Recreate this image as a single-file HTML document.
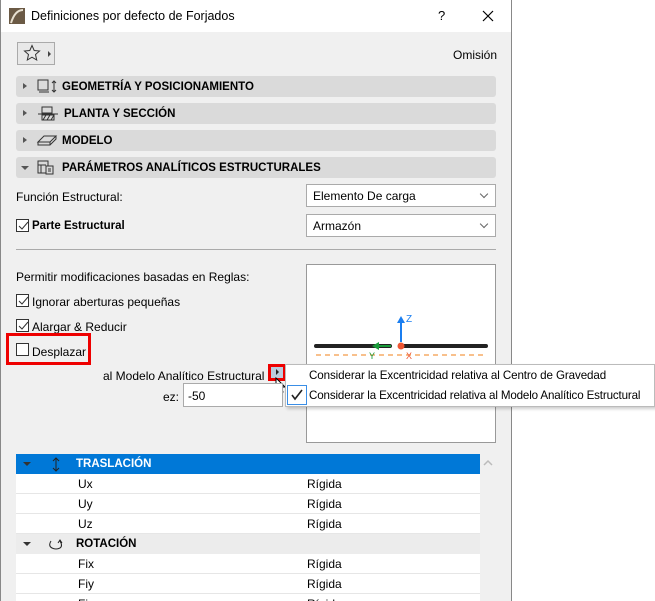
<!DOCTYPE html>
<html><head><meta charset="utf-8"><style>
*{box-sizing:border-box;margin:0;padding:0}
html,body{width:655px;height:601px;overflow:hidden}
body{background:#fff;font-family:"Liberation Sans",sans-serif;font-size:12px;color:#000;position:relative}
.a{position:absolute;white-space:nowrap}
.dlg{left:0;top:0;width:512px;height:601px;background:#f0f0f0;border-left:1px solid #888;border-right:1px solid #888}
.title{left:1px;top:0;width:510px;height:32px;background:#fff}
.bar{left:16px;width:480px;height:21px;background:#dadada;border-radius:3px;font-weight:bold;font-size:11.5px;line-height:22px}
.tri{position:absolute;left:7px;top:7px;width:0;height:0;border-top:3.5px solid transparent;border-bottom:3.5px solid transparent;border-left:4px solid #555}
.dd{left:306px;width:190px;height:23px;background:#fff;border:1px solid #aaa;padding-left:6px;line-height:22px}
.dd:after{content:"";position:absolute;right:8px;top:6px;width:5px;height:5px;border-right:1px solid #666;border-bottom:1px solid #666;transform:rotate(45deg)}
.cb{width:13px;height:13px;border:1px solid #333;background:#fff}
.row{left:16px;width:464px;height:20px;background:#fff;border-bottom:1px solid #e6e6e6;line-height:20px}
.row .n{position:absolute;left:62px}.row .v{position:absolute;left:291px}
</style></head><body>
<div class="a dlg"></div>
<div class="a title"></div>
<svg class="a" style="left:9px;top:8px" width="16" height="16"><rect width="16" height="16" fill="#6b5a45"/><path d="M2 15 Q6 2 14 2" stroke="#e8e0d0" stroke-width="2" fill="none"/></svg>
<div class="a" style="left:31px;top:9px;font-size:12.5px">Definiciones por defecto de Forjados</div>
<div class="a" style="left:438px;top:8px;font-size:13px">?</div>
<svg class="a" style="left:482px;top:10px" width="12" height="12"><path d="M1 1L11 11M11 1L1 11" stroke="#000" stroke-width="1.2"/></svg>
<div class="a" style="left:17px;top:42px;width:38px;height:23px;border:1px solid #aaa;background:#e8e8e8"></div>
<svg class="a" style="left:23px;top:44px" width="18" height="18"><path d="M9 1.5L11.2 6.5L16.5 7L12.5 10.5L13.7 16L9 13.2L4.3 16L5.5 10.5L1.5 7L6.8 6.5Z" fill="none" stroke="#333"/></svg>
<div class="a" style="left:48px;top:51px;border-top:3px solid transparent;border-bottom:3px solid transparent;border-left:3.5px solid #444"></div>
<div class="a" style="left:453px;top:48px">Omisión</div>

<div class="a bar" style="top:76px"><span class="tri"></span><svg class="a" style="left:20px;top:3px" width="24" height="16"><rect x="2" y="1" width="10" height="10" fill="none" stroke="#333"/><path d="M3 13h10M18 2v11M16 4l2-2 2 2M16 11l2 2 2-2" stroke="#333" fill="none"/></svg><span style="position:absolute;left:46px">GEOMETRÍA Y POSICIONAMIENTO</span></div>
<div class="a bar" style="top:103px"><span class="tri"></span><svg class="a" style="left:20px;top:3px" width="24" height="16"><rect x="6" y="1" width="10" height="6" fill="none" stroke="#333"/><path d="M2 8h20M6 9h12v5H6zM7 14l3-5M11 14l3-5M15 14l3-5" stroke="#333" fill="none"/></svg><span style="position:absolute;left:48px">PLANTA Y SECCIÓN</span></div>
<div class="a bar" style="top:130px"><span class="tri"></span><svg class="a" style="left:20px;top:3px" width="24" height="16"><path d="M2 9l6-6h12l-6 6zM2 9v3h12l6-6v-3M14 9v3" stroke="#333" fill="none"/></svg><span style="position:absolute;left:46px">MODELO</span></div>
<div class="a bar" style="top:157px"><span style="position:absolute;left:5px;top:9px;border-left:4px solid transparent;border-right:4px solid transparent;border-top:4px solid #555"></span><svg class="a" style="left:20px;top:2px" width="24" height="17"><path d="M2 2h10v12H2zM2 6h8M5 6v8" stroke="#333" fill="none"/><rect x="10" y="7" width="7" height="8" fill="#dadada" stroke="#333"/><path d="M12 10h3M12 12h3" stroke="#333"/></svg><span style="position:absolute;left:46px">PARÁMETROS ANALÍTICOS ESTRUCTURALES</span></div>

<div class="a" style="left:16px;top:190px">Función Estructural:</div>
<div class="a dd" style="top:184px">Elemento De carga</div>
<div class="a cb" style="left:16px;top:219px"></div>
<svg class="a" style="left:17px;top:220px" width="12" height="12"><path d="M2 6l3 3 6-7" stroke="#333" fill="none"/></svg>
<div class="a" style="left:32px;top:220px;font-weight:bold;font-size:11.5px">Parte Estructural</div>
<div class="a dd" style="top:214px">Armazón</div>
<div class="a" style="left:16px;top:249px;width:480px;height:1px;background:#aaa"></div>

<div class="a" style="left:16px;top:270px">Permitir modificaciones basadas en Reglas:</div>
<div class="a cb" style="left:16px;top:294px"></div><svg class="a" style="left:17px;top:295px" width="12" height="12"><path d="M2 6l3 3 6-7" stroke="#333" fill="none"/></svg>
<div class="a" style="left:32px;top:295px">Ignorar aberturas pequeñas</div>
<div class="a cb" style="left:16px;top:319px"></div><svg class="a" style="left:17px;top:320px" width="12" height="12"><path d="M2 6l3 3 6-7" stroke="#333" fill="none"/></svg>
<div class="a" style="left:32px;top:320px">Alargar &amp; Reducir</div>
<div class="a" style="left:6px;top:333px;width:85px;height:32px;border:3px solid #e00"></div>
<div class="a cb" style="left:16px;top:343px"></div>
<div class="a" style="left:32px;top:345px">Desplazar</div>

<div class="a" style="left:306px;top:264px;width:190px;height:179px;background:#fff;border:1px solid #999"></div>
<svg class="a" style="left:306px;top:264px" width="190" height="179">
<path d="M10 82H84M98 82H180" stroke="#222" stroke-width="4" stroke-linecap="round"/>
<path d="M10 91H180" stroke="#f0801a" stroke-dasharray="5 4"/>
<path d="M85 82H72" stroke="#1a9a3a" stroke-width="2"/><path d="M66 82l7-4v8z" fill="#1a9a3a"/>
<circle cx="95" cy="82" r="3.5" fill="#e53"/>
<path d="M95 78V58" stroke="#1a7ef0" stroke-width="2"/><path d="M95 52l-4 7h8z" fill="#1a7ef0"/>
<text x="100" y="58" font-size="10" fill="#1a7ef0" font-family="Liberation Sans">Z</text>
<text x="63" y="95" font-size="9" fill="#1a9a3a" font-family="Liberation Sans">Y</text>
<text x="100" y="95" font-size="9" fill="#e53" font-family="Liberation Sans">X</text>
</svg>

<div class="a" style="left:103px;top:369px">al Modelo Analítico Estructural</div>
<div class="a" style="left:268px;top:364px;width:18px;height:17px;border:3px solid #e00;background:#bcd"></div>
<div class="a" style="left:276px;top:369px;border-top:3px solid transparent;border-bottom:3px solid transparent;border-left:3px solid #222"></div>
<svg class="a" style="left:275px;top:377px" width="12" height="18"><path d="M1 1v13l3-3 2 5 2-1-2-5h4z" fill="#fff" stroke="#000"/></svg>
<div class="a" style="left:163px;top:390px">ez:</div>
<div class="a" style="left:183px;top:383px;width:100px;height:24px;background:#fff;border:1px solid #aaa;padding:5px 0 0 4px">-50</div>

<div class="a" style="left:285px;top:364px;width:370px;height:43px;background:#fff;border:1px solid #bbb;box-shadow:2px 2px 3px rgba(0,0,0,.2)"></div>
<div class="a" style="left:309px;top:369px;font-size:11.6px;letter-spacing:-0.1px">Considerar la Excentricidad relativa al Centro de Gravedad</div>
<div class="a" style="left:287px;top:385px;width:20px;height:20px;border:1px solid #3a8ee6"></div>
<svg class="a" style="left:290px;top:388px" width="14" height="14"><path d="M2 7l3 4 7-9" stroke="#222" stroke-width="1.6" fill="none"/></svg>
<div class="a" style="left:309px;top:389px;font-size:11.6px;letter-spacing:-0.15px">Considerar la Excentricidad relativa al Modelo Analítico Estructural</div>

<div class="a" style="left:16px;top:454px;width:464px;height:20px;background:#0078d7;color:#fff;font-weight:bold;font-size:11.5px;line-height:21px">
<span style="position:absolute;left:7px;top:8px;border-left:4px solid transparent;border-right:4px solid transparent;border-top:4px solid #333"></span>
<svg class="a" style="left:35px;top:3px" width="10" height="15"><path d="M5 1v13M2 4l3-3 3 3M2 11l3 3 3-3" stroke="#222" fill="none"/></svg>
<span style="position:absolute;left:60px">TRASLACIÓN</span></div>
<svg class="a" style="left:483px;top:459px" width="10" height="8"><path d="M1 6l4-4 4 4" stroke="#bbb" fill="none" stroke-width="1.5"/></svg>
<div class="a row" style="top:474px"><span class="n">Ux</span><span class="v">Rígida</span></div>
<div class="a row" style="top:494px"><span class="n">Uy</span><span class="v">Rígida</span></div>
<div class="a row" style="top:514px"><span class="n">Uz</span><span class="v">Rígida</span></div>
<div class="a" style="left:16px;top:534px;width:464px;height:20px;background:#ececec;font-weight:bold;font-size:11.5px;line-height:21px">
<span style="position:absolute;left:7px;top:8px;border-left:4px solid transparent;border-right:4px solid transparent;border-top:4px solid #333"></span>
<svg class="a" style="left:31px;top:3px" width="18" height="14"><path d="M4 4Q1 9 5 11Q9 13 13 11Q16 9 13 4M11 6l2-3 2 3" stroke="#222" fill="none"/></svg>
<span style="position:absolute;left:60px">ROTACIÓN</span></div>
<div class="a row" style="top:554px"><span class="n">Fix</span><span class="v">Rígida</span></div>
<div class="a row" style="top:574px"><span class="n">Fiy</span><span class="v">Rígida</span></div>
<div class="a row" style="top:594px;height:7px;overflow:hidden;border:0"><span class="n">Fiz</span><span class="v">Rígida</span></div>
</body></html>
